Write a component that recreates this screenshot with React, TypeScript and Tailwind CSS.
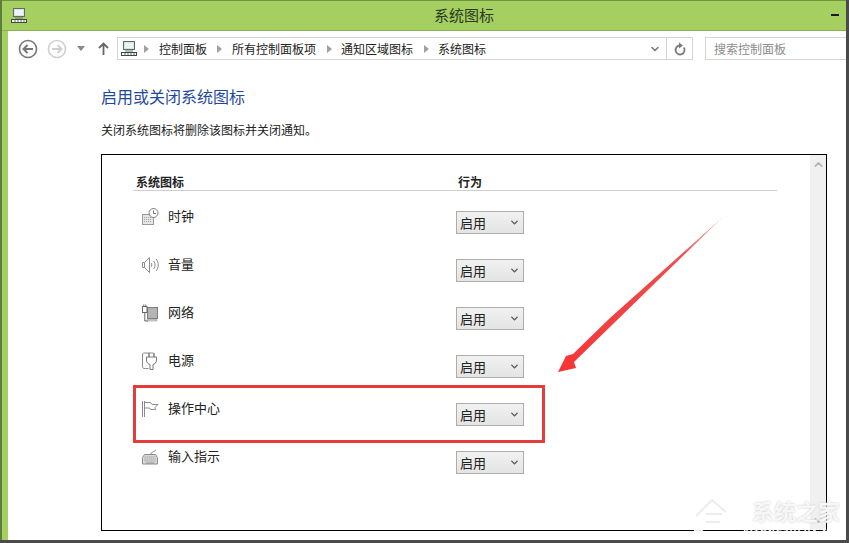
import type { ReactNode } from "react";
import { ChevronDown, ChevronUp } from "lucide-react";

const cjk = "font-['Noto_Sans_CJK_SC','Noto_Sans',sans-serif]";

const PcIcon = ({ className }: { className: string }) => (
  <svg viewBox="0 0 16 15" className={className}>
    <rect x="2.500" y="0.500" width="11" height="8" fill="#d8e4e4" stroke="#5f6b66" />
    <rect x="4" y="2" width="8" height="5" fill="#eef4f4" />
    <path d="M4 9.500h8v1H4z" fill="#6d7872" />
    <rect x="0.500" y="11.500" width="15" height="3" fill="#fff" stroke="#3f4a40" />
    <path d="M4 11v4M7 11v4M10 11v4M13 11v4" stroke="#3f4a40" strokeWidth="0.8" />
  </svg>
);

const NavCircle = ({ color, dir }: { color: string; dir: "left" | "right" }) => (
  <svg viewBox="0 0 20 20" className="w-5 h-5">
    <circle cx="10" cy="10" r="8.500" fill="none" stroke={color} strokeWidth="1.600" />
    <path
      d={dir === "left" ? "M15 10H6M9.500 6 5.500 10l4 4" : "M5 10h9M10.500 6l4 4-4 4"}
      fill="none"
      stroke={color}
      strokeWidth="2"
    />
  </svg>
);

const Caret = () => (
  <svg viewBox="0 0 5 8" className="w-[5px] h-2 shrink-0">
    <path d="M0 0l5 4-5 4z" fill="#a0a0a0" />
  </svg>
);

const Crumb = ({ children }: { children: ReactNode }) => (
  <div className="text-[12px] leading-[18px] text-[#222] whitespace-nowrap">{children}</div>
);

const iconCls = "w-[18px] h-[18px]";
const stroke = { fill: "none", stroke: "#8b8b8b", strokeWidth: 1 };

const ClockIcon = () => (
  <svg viewBox="0 0 18 18" className={iconCls}>
    <rect x="1.500" y="6.500" width="11" height="10" fill="#e6e6e6" stroke="#9a9a9a" />
    <path d="M3 9.500h8M3 11.500h8M3 13.500h8" stroke="#a5a5a5" strokeDasharray="1 1" />
    <circle cx="12.500" cy="5" r="4.500" fill="#fff" stroke="#7d7d7d" />
    <path d="M12.500 2.500V5.500H15" {...stroke} stroke="#6f6f6f" />
  </svg>
);

const VolumeIcon = () => (
  <svg viewBox="0 0 18 18" className={iconCls}>
    <path d="M1.500 6.500h2v5h-2zM3.500 6.500l5-5v15l-5-5" {...stroke} />
    <path d="M10 7c1 1 1 3 0 4M12.500 5c2 2 2 6 0 8M15 3c3 3 3 9 0 12" {...stroke} />
  </svg>
);

const NetworkIcon = () => (
  <svg viewBox="0 0 18 18" className={iconCls}>
    <rect x="6.500" y="3.500" width="10" height="11" fill="#b4b4b4" stroke="#7c7c7c" />
    <path d="M6 15.500h10v1.500H6z" fill="#d5d5d5" stroke="#999" strokeWidth="0.600" />
    <rect x="1.500" y="2.500" width="4.500" height="6" fill="#fff" stroke="#666" />
    <path d="M2.800 0.500v2M4.800 0.500v2" stroke="#666" />
    <path d="M3.800 8.500V17h3" fill="none" stroke="#666" />
  </svg>
);

const PowerIcon = () => (
  <svg viewBox="0 0 18 18" className={iconCls}>
    <path d="M4.500 16.500h-2l-1-1.500v-13l1-1h10" {...stroke} />
    <path d="M4.500 16.500h3" {...stroke} />
    <path d="M8 1v4M13 1v4" stroke="#777" strokeWidth="1.400" />
    <path d="M5.500 5h10v3c0 3-2 4-3.500 4.500v5H9v-5C7.500 12 5.500 11 5.500 8z" fill="#fff" stroke="#777" />
  </svg>
);

const FlagIcon = () => (
  <svg viewBox="0 0 18 18" className={iconCls}>
    <path d="M1.500 1v16" {...stroke} />
    <path d="M3.500 1v16" {...stroke} />
    <path d="M3.500 2.500h6l1.500 2h6l-3 3 .5 2h-5l-1-1.500H3.500" {...stroke} />
  </svg>
);

const KeyboardIcon = () => (
  <svg viewBox="0 0 18 18" className={iconCls}>
    <path d="M10 6c0-2 2-1.500 5-4" {...stroke} />
    <path d="M3.500 6.500h11l2 3v6.500h-15V9.500z" fill="#dcdcdc" stroke="#8a8a8a" />
    <path d="M3.500 9h11M3.500 11h11M3.500 13h11" stroke="#8f8f8f" strokeDasharray="1.200 0.800" />
    <path d="M5 15h8" stroke="#8f8f8f" />
  </svg>
);

const rows = [
  { label: "时钟", icon: <ClockIcon /> },
  { label: "音量", icon: <VolumeIcon /> },
  { label: "网络", icon: <NetworkIcon /> },
  { label: "电源", icon: <PowerIcon /> },
  { label: "操作中心", icon: <FlagIcon /> },
  { label: "输入指示", icon: <KeyboardIcon /> },
];

const FakeSelect = () => (
  <div className="mt-[13px] w-[68px] h-[23px] border border-[#adadad] bg-linear-to-b from-[#f1f1f1] to-[#e4e4e4] flex items-center justify-between pl-[3px] pr-[2px]">
    <span className="text-[13px] leading-[18px] text-[#222]">启用</span>
    <ChevronDown className="mr-[1px] w-[11px] h-[11px] text-[#555]" strokeWidth={3} />
  </div>
);

export default function App() {
  return (
    <div className={`relative w-[849px] h-[543px] overflow-hidden bg-[#a5cf60] flex flex-col ${cjk}`}>
      {/* title bar */}
      <div className="h-[31px] shrink-0 flex items-center border-t border-[#6f9440] border-b-[#8bb050] border-b">
        <PcIcon className="ml-[11px] w-4 h-[15px]" />
        <span className="ml-[407px] text-[15px] text-[#2b3a20]">系统图标</span>
        <div className="ml-auto mr-[10px] mb-[2px] w-2 h-[2px] bg-[#1a1a1a]" />
      </div>

      {/* client area */}
      <div className="flex-1 min-h-0 flex flex-col ml-2 mr-[3px] bg-white">
        <div className="mt-[6px] h-[23px] shrink-0 flex items-center">
          <div className="ml-[10px]"><NavCircle color="#777" dir="left" /></div>
          <div className="ml-[9px]"><NavCircle color="#cfcfcf" dir="right" /></div>
          <svg viewBox="0 0 8 5" className="ml-[10px] w-2 h-[5px]"><path d="M0 0h8L4 5z" fill="#888" /></svg>
          <svg viewBox="0 0 11 13" className="ml-[13px] w-[11px] h-[13px]">
            <path d="M5.500 13V2M1 6l4.500-4.500L10 6" fill="none" stroke="#666" strokeWidth="1.800" />
          </svg>
          <div className="ml-[8px] w-[576px] h-[23px] border border-[#d5d5d5] flex items-center">
            <PcIcon className="ml-[3px] w-4 h-[15px]" />
            <div className="ml-[7px]"><Caret /></div>
            <div className="ml-[10px]"><Crumb>控制面板</Crumb></div>
            <div className="ml-[10px]"><Caret /></div>
            <div className="ml-[10px]"><Crumb>所有控制面板项</Crumb></div>
            <div className="ml-[11px]"><Caret /></div>
            <div className="ml-[9px]"><Crumb>通知区域图标</Crumb></div>
            <div className="ml-[11px]"><Caret /></div>
            <div className="ml-[9px]"><Crumb>系统图标</Crumb></div>
            <ChevronDown className="ml-auto mr-[2px] w-3 h-3 text-[#777]" strokeWidth={3} />
            <div className="ml-[3px] w-[26px] h-full border-l border-[#d5d5d5] flex items-center justify-center">
              <svg viewBox="0 0 12 14" className="w-3 h-[14px]">
                <path d="M9.800 5.500A4.500 4.500 0 1 1 6 3.500" fill="none" stroke="#7a7a7a" strokeWidth="1.800" />
                <path d="M5 0.500l4 3-4 3z" fill="#7a7a7a" />
              </svg>
            </div>
          </div>
          <div className="ml-[12px] flex-1 h-[23px] border-y border-l border-[#d5d5d5] flex items-center pl-[8px]">
            <span className="text-[12px] leading-[18px] text-[#8c8c8c]">搜索控制面板</span>
          </div>
        </div>

        <div className="ml-[93px] mt-6 h-6 leading-6 text-[16px] text-[#1f4a9c]">启用或关闭系统图标</div>
        <div className="ml-[93px] mt-[13px] h-[18px] leading-[18px] text-[12px] text-[#222]">关闭系统图标将删除该图标并关闭通知。</div>

        {/* icon list */}
        <div className="ml-[93px] mt-[15px] w-[726px] h-[377px] border border-black flex">
          <div className="flex-1 pl-[31px]">
            <div className="w-[644px] h-[36px] border-b border-[#cfcfcf] grid grid-cols-[323px_auto] items-end">
              <span className="pl-[3px] text-[12px] leading-[16px] font-bold text-[#222]">系统图标</span>
              <span className="pl-[2px] text-[12px] leading-[16px] font-bold text-[#222]">行为</span>
            </div>
            <div className="mt-[7px]">
              {rows.map((row) => (
                <div key={row.label} className="h-[48px] grid grid-cols-[323px_auto]">
                  <div className="flex items-start pl-[8px]">
                    <div className="mt-[10px]">{row.icon}</div>
                    <span className="ml-[9px] mt-[9px] text-[13px] leading-[18px] text-[#222]">{row.label}</span>
                  </div>
                  <FakeSelect />
                </div>
              ))}
            </div>
          </div>
          <div className="w-4 bg-[#f0f0f0] flex flex-col items-center justify-between py-[3px] text-[#b5b5b5]">
            <ChevronUp className="w-[13px] h-[13px]" strokeWidth={3} />
            <ChevronDown className="w-[13px] h-[13px]" strokeWidth={3} />
          </div>
        </div>
      </div>

      {/* window edges */}
      <div className="absolute left-0 top-0 w-[2px] h-full bg-[#5f7d3c]" />
      <div className="absolute right-0 top-0 w-[3px] h-full bg-[#4a4a4a]" />
      <div className="absolute left-0 bottom-0 w-full h-[3px] bg-[#4a4a4a]" />

      {/* red annotation */}
      <div className="absolute left-[133px] top-[385px] w-[412px] h-[58px] border-[3px] border-[#e53b3b]" />
      <svg className="absolute left-[550px] top-[210px] w-[180px] h-[170px]" viewBox="550 210 180 170">
        <defs>
          <linearGradient id="tail" x1="724" y1="216" x2="560" y2="372" gradientUnits="userSpaceOnUse">
            <stop offset="0" stopColor="#f6c5c5" />
            <stop offset="0.25" stopColor="#ee4f4f" />
            <stop offset="1" stopColor="#f53535" />
          </linearGradient>
        </defs>
        <polygon points="724,216 610,318 573,354 566,356 558,372 576,368 574,362 612,325" fill="url(#tail)" />
      </svg>

      {/* watermark */}
      <svg className="absolute left-[676px] top-[490px] w-[68px] h-[46px]" viewBox="0 0 68 46">
        <path d="M2 22h16L36 5l16 14 8 4-6 6 2 8H30l-6 7H18V26H2z" fill="#fff" opacity="0.9" />
        <path d="M20 26 36 10l14 12M30 24h16M30 32h14" fill="none" stroke="#ececec" strokeWidth="2" />
      </svg>
      <div className="absolute left-[752px] top-[498px] text-[22px] leading-[24px] font-bold text-white/85 [text-shadow:0_0_2px_#c0c0c0] whitespace-nowrap">
        系统之家
      </div>
      <div className="absolute left-[743px] top-[529px] text-[9px] leading-[8px] tracking-[1px] font-bold text-white whitespace-nowrap">
        XITONGZHIJIA.NET
      </div>
    </div>
  );
}
